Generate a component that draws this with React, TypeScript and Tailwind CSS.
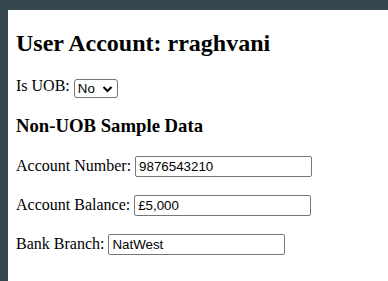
export default function App() {
  const serif = { fontFamily: '"Liberation Serif", "Times New Roman", serif' };
  const inputCls =
    "w-[177px] h-[21px] border border-[#767676] rounded-[2px] px-[3px] text-[13.33px] text-black bg-white align-baseline outline-none";
  const sans = { fontFamily: '"Liberation Sans", Arial, sans-serif' };
  return (
    <div className="min-h-screen bg-[#37474f] pt-[10px] pl-[8px]">
      <div className="bg-white min-h-[271px] px-[8px] pt-[20px] text-black text-[16px]" style={serif}>
        <h2 className="text-[24px] font-bold leading-[normal] mb-[20px]">User Account: rraghvani</h2>
        <p className="leading-[normal] mb-[16px]">
          Is UOB:{" "}
          <span
            className="inline-flex items-center h-[19px] w-[44px] border border-[#767676] rounded-[3px] pl-[3px] pr-[2px] text-[13.33px] justify-between align-baseline relative top-[2px]"
            style={sans}
          >
            <span>No</span>
            <svg width="11" height="10" viewBox="0 0 11 10" className="mr-[2px]">
              <path d="M1.5 3 L5.5 7 L9.5 3" stroke="#000" strokeWidth="2" fill="none" />
            </svg>
          </span>
        </p>
        <h3 className="text-[18.72px] font-bold leading-[normal] mt-[18.72px] mb-[19.72px]">Non-UOB Sample Data</h3>
        <p className="leading-[normal] mb-[18px]">
          Account Number: <input className={inputCls} style={sans} defaultValue="9876543210" />
        </p>
        <p className="leading-[normal] mb-[18px]">
          Account Balance: <input className={inputCls} style={sans} defaultValue="£5,000" />
        </p>
        <p className="leading-[normal] mb-[18px]">
          Bank Branch: <input className={inputCls} style={sans} defaultValue="NatWest" />
        </p>
      </div>
    </div>
  );
}
